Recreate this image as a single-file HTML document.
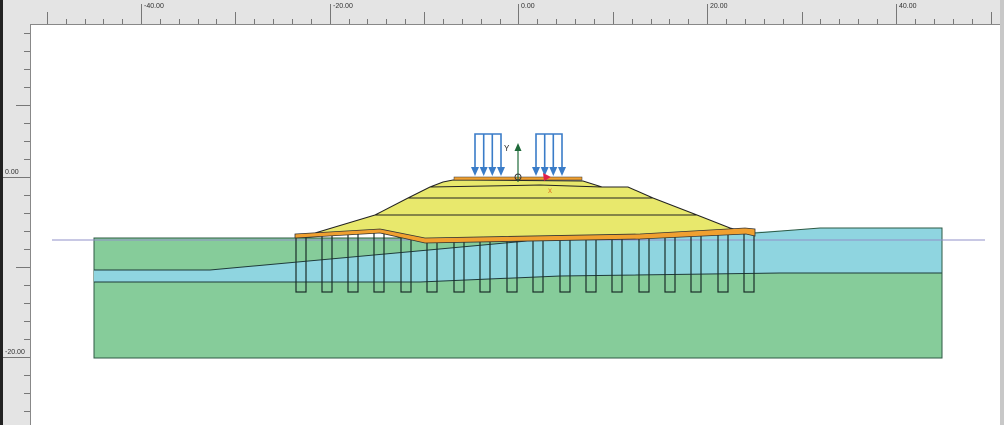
<!DOCTYPE html>
<html><head><meta charset="utf-8"><style>
html,body{margin:0;padding:0;width:1004px;height:425px;overflow:hidden;background:#fff;font-family:"Liberation Sans",sans-serif}
</style></head><body>
<svg width="1004" height="425" viewBox="0 0 1004 425" xmlns="http://www.w3.org/2000/svg" font-family="Liberation Sans, sans-serif">
<rect x="0" y="0" width="1004" height="425" fill="#fff"/>
<!-- rulers -->
<rect x="0" y="0" width="1004" height="25" fill="#e4e4e4"/>
<rect x="0" y="0" width="31" height="425" fill="#e4e4e4"/>
<rect x="0" y="0" width="3" height="425" fill="#222"/>
<rect x="1000" y="0" width="4" height="425" fill="#c8c8c8"/>
<line x1="30" y1="24.5" x2="1000" y2="24.5" stroke="#888"/>
<line x1="30.5" y1="24" x2="30.5" y2="425" stroke="#888"/>
<g stroke="#777" stroke-width="1">
<path d="M47.5 12V24M66.5 19V24M85.5 19V24M103.5 19V24M122.5 19V24M141.5 4V24M160.5 19V24M179.5 19V24M198.5 19V24M216.5 19V24M235.5 12V24M254.5 19V24M273.5 19V24M292.5 19V24M311.5 19V24M330.5 4V24M349.5 19V24M367.5 19V24M386.5 19V24M405.5 19V24M424.5 12V24M443.5 19V24M462.5 19V24M481.5 19V24M500.5 19V24M518.5 4V24M537.5 19V24M556.5 19V24M575.5 19V24M594.5 19V24M613.5 12V24M632.5 19V24M651.5 19V24M669.5 19V24M688.5 19V24M707.5 4V24M726.5 19V24M745.5 19V24M764.5 19V24M783.5 19V24M802.5 12V24M820.5 19V24M839.5 19V24M858.5 19V24M877.5 19V24M896.5 4V24M915.5 19V24M934.5 19V24M953.5 19V24M972.5 19V24M991.5 12V24"/>
<path d="M24 33.5H30M24 51.5H30M24 69.5H30M24 87.5H30M16 105.5H30M24 123.5H30M24 141.5H30M24 159.5H30M3 177.5H30M24 195.5H30M24 213.5H30M24 231.5H30M24 249.5H30M16 267.5H30M24 285.5H30M24 303.5H30M24 321.5H30M24 339.5H30M3 357.5H30M24 375.5H30M24 393.5H30M24 411.5H30"/>
</g>
<g font-size="7" fill="#333">
<text x="144" y="8">-40.00</text><text x="333" y="8">-20.00</text><text x="521" y="8">0.00</text><text x="710" y="8">20.00</text><text x="899" y="8">40.00</text>
<text x="5" y="174">0.00</text><text x="5" y="354">-20.00</text>
</g>
<!-- soil -->
<rect x="94" y="238" width="848" height="120" fill="#86cc9a" stroke="#2e5a44"/>
<path d="M94 270 L210 270 L560 238 L755 232 L820 228 L942 228 L942 273 L780 273 L560 276 L420 282 L94 282Z" fill="#8fd5e0"/>
<path d="M94 270 L210 270 L560 238" fill="none" stroke="#1e3a3a"/>
<path d="M94 282 L420 282 L560 276 L780 273 L942 273" fill="none" stroke="#1e3a3a"/>
<path d="M755 233 L820 228 L942 228 L942 358" fill="none" stroke="#2e5a44"/>
<line x1="52" y1="240" x2="985" y2="240" stroke="#9090c8"/>
<!-- piles -->
<g fill="none" stroke="#1a2e28" stroke-width="1.2">
<rect x="296" y="236" width="10" height="56"/><rect x="322" y="234" width="10" height="58"/><rect x="348" y="232" width="10" height="60"/><rect x="374" y="231" width="10" height="61"/><rect x="401" y="234" width="10" height="58"/><rect x="427" y="240" width="10" height="52"/><rect x="454" y="240" width="10" height="52"/><rect x="480" y="239" width="10" height="53"/><rect x="507" y="239" width="10" height="53"/><rect x="533" y="239" width="10" height="53"/><rect x="560" y="239" width="10" height="53"/><rect x="586" y="238" width="10" height="54"/><rect x="612" y="238" width="10" height="54"/><rect x="639" y="237" width="10" height="55"/><rect x="665" y="235" width="10" height="57"/><rect x="691" y="233" width="10" height="59"/><rect x="718" y="232" width="10" height="60"/><rect x="744" y="230" width="10" height="62"/>
</g>
<!-- embankment -->
<path d="M305 236 L375 215 L408 198 L430 187 L443 182 L453 180 L583 181 L602 187 L628 187 L653 198 L697 215 L730 228 L746 232 L640 237 L425 241 L380 230Z" fill="#e8e86c" stroke="#222"/>
<path d="M408 198 H653 M375 215 H697 M430 187 L540 185 L602 187" stroke="#222" fill="none"/>
<path d="M295 234 L380 229 L425 238 L640 234 L745 228 L755 229 L755 236 L746 234 L640 239 L425 243 L380 233 L295 238Z" fill="#f0a030" stroke="#333" stroke-width="0.8"/>
<rect x="454" y="177" width="128" height="3" fill="#f0a030" stroke="#333" stroke-width="0.5"/>
<!-- loads -->
<g stroke="#3a7cc8" stroke-width="1.6" fill="none">
<path d="M475 168V134H501V168M483.7 134V168M492.3 134V168"/>
<path d="M536 168V134H562V168M544.7 134V168M553.3 134V168"/>
</g>
<g fill="#3a7cc8">
<path d="M471 167h8l-4 9z M479.7 167h8l-4 9z M488.3 167h8l-4 9z M497 167h8l-4 9z"/>
<path d="M532 167h8l-4 9z M540.7 167h8l-4 9z M549.3 167h8l-4 9z M558 167h8l-4 9z"/>
</g>
<line x1="518" y1="182" x2="518" y2="150" stroke="#1f6a3a" stroke-width="1.2"/>
<path d="M514.5 151 L518 143 L521.5 151Z" fill="#1f6a3a"/>
<circle cx="518" cy="177" r="3" fill="none" stroke="#333"/>
<path d="M543 173 L551 177 L544 181Z" fill="#e0204a"/>
<text x="504" y="151" font-size="8" fill="#222">Y</text>
<text x="548" y="193" font-size="8" fill="#e07020">x</text>
</svg>
</body></html>
